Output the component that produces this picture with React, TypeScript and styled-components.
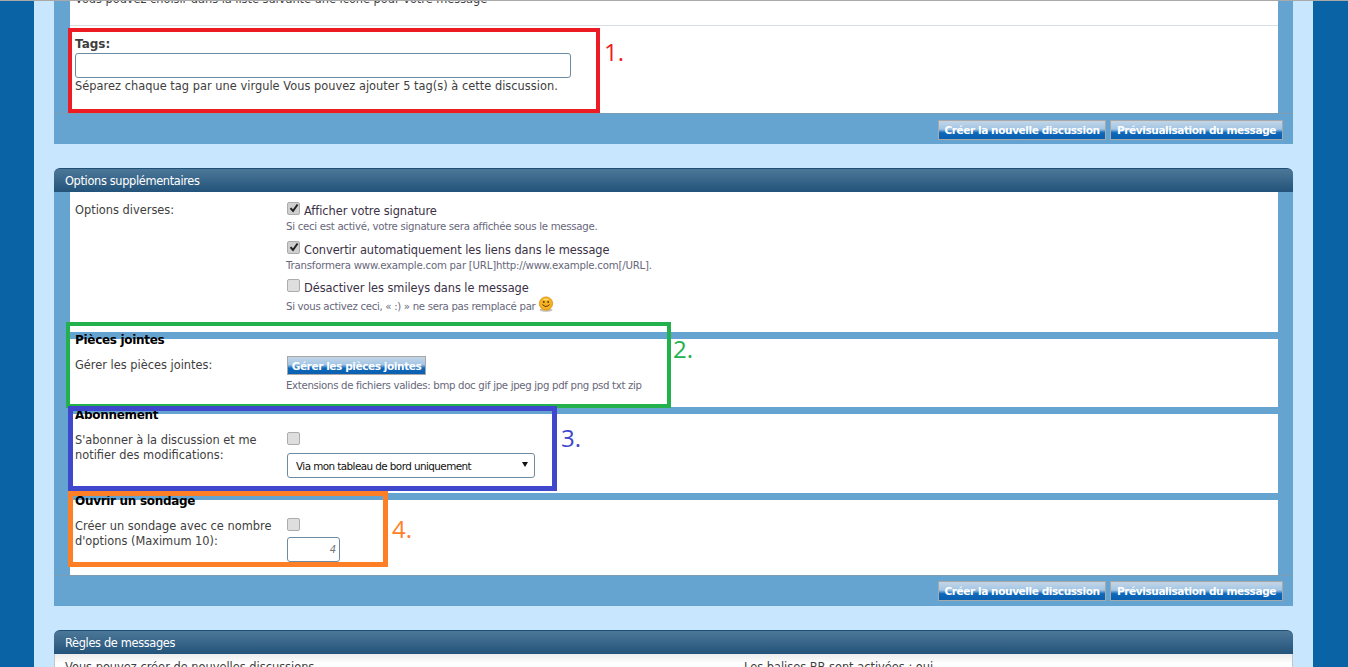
import React from "react";
import styled, { createGlobalStyle } from "styled-components";

const Global = createGlobalStyle`
  html, body { margin: 0; padding: 0; height: 667px; overflow: hidden; }
  body { font-family: "DejaVu Sans", Verdana, sans-serif; font-size: 12px; color: #3e3e3e; background: #0a63a5; }
  * { box-sizing: border-box; }
`;

const Page = styled.div`
  position: relative;
  height: 667px;
  overflow: hidden;
  background: #0a63a5;
  border-top: 1px solid #a9a9a9;
  padding: 0 35px 0 34px;
`;
const Column = styled.main`
  height: 666px;
  overflow: hidden;
  background: #c8e6fd;
  padding: 0 20px;
`;
const Panel = styled.section`
  margin-bottom: 24px;
`;
const PanelHead = styled.h2`
  margin: 0;
  height: 24px;
  padding: 0 11px;
  font-size: 11.4px;
  font-weight: 400;
  line-height: 25px;
  letter-spacing: -0.35px;
  color: #fff;
  background: linear-gradient(#4c7798, #23537a);
  border-top: 1px solid #1f4e75;
  border-radius: 6px 6px 0 0;
`;
const PanelBody = styled.div<{ $gap?: number }>`
  display: flex;
  flex-direction: column;
  gap: ${(p) => p.$gap ?? 7}px;
  background: #65a4d1;
  padding: 0 15px 0 16px;
  border-bottom: 1px solid #7d9db5;
`;
const Block = styled.div<{ $h: number }>`
  height: ${(p) => p.$h}px;
  background: #fff;
  padding: 0 0 0 5px;
  position: relative;
`;
const TopBlock = styled(Block)`
  overflow: hidden;
  border-bottom: 1px solid #d5dfe5;
`;
const Cut = styled.p`
  margin: -9px 0 0;
  font-size: 11.4px;
  letter-spacing: -0.03px;
  line-height: 14px;
`;
const TagLabel = styled.label`
  display: block;
  padding-top: 11px;
  font-size: 12px;
  font-weight: 700;
  line-height: 15px;
`;
const TagInput = styled.input`
  display: block;
  width: 496px;
  height: 25px;
  margin: 1px 0 1px;
  border: 1px solid #6c8ba3;
  border-radius: 3px;
  background: #fff;
`;
const Hint = styled.p`
  margin: 0;
  font-size: 11.4px;
  letter-spacing: 0.02px;
  line-height: 15px;
`;
const Foot = styled.div<{ $top: number }>`
  height: 30px;
  display: flex;
  justify-content: flex-end;
  align-items: flex-start;
  gap: 4px;
  background: #65a4d1;
  padding: ${(p) => p.$top}px 10px 0 0;
`;
const Btn = styled.button<{ $w: number }>`
  width: ${(p) => p.$w}px;
  height: 20px;
  padding: 0;
  font-family: "DejaVu Sans", Verdana, sans-serif;
  font-size: 10.6px;
  font-weight: 700;
  letter-spacing: -0.45px;
  color: #fff;
  border: 1px solid #a8a8a8;
  background: linear-gradient(#c3d5e5 0%, #a3c6e6 45%, #0f68ba 65%, #0a5fb0 100%);
  white-space: nowrap;
`;
const Row = styled.div<{ $top?: number }>`
  display: grid;
  grid-template-columns: 212px 1fr;
  padding-top: ${(p) => p.$top ?? 8}px;
`;
const RowLabel = styled.div`
  font-size: 11.4px;
  line-height: 15px;
`;
const Check = styled.span<{ $on?: boolean }>`
  display: flex;
  align-items: center;
  justify-content: center;
  width: 13px;
  height: 13px;
  background: ${(p) => (p.$on ? "#cfcfcf" : "#dedede")};
  border: 1px solid #acacac;
  border-radius: 2px;
  color: #222;
  flex: none;
`;
const OptionCheck = styled(Check)`
  margin-top: -5px;
`;
const OptionList = styled.div`
  margin-top: -1px;
`;
const Option = styled.div`
  display: flex;
  align-items: center;
  gap: 4px;
  height: 17px;
  font-size: 11.4px;
  letter-spacing: -0.06px;
  color: #3b3147;
`;
const Small = styled.p<{ $top?: number; $ls?: number }>`
  display: flex;
  align-items: flex-start;
  gap: 4px;
  margin: ${(p) => p.$top ?? 0}px 0 0 -1px;
  height: 15px;
  font-size: 10.2px;
  letter-spacing: ${(p) => p.$ls ?? -0.29}px;
  line-height: 15px;
  color: #67677a;
`;
const SmileyWrap = styled.span`
  display: block;
  margin: -3px 0 0 -1px;
  height: 16px;
`;
const OptionGroup = styled.div<{ $mb?: number }>`
  margin-bottom: ${(p) => p.$mb ?? 0}px;
`;
const SectionTitle = styled.h3`
  margin: -7px 0 0;
  height: 18px;
  font-size: 12px;
  font-weight: 700;
  letter-spacing: -0.3px;
  line-height: 16px;
  color: #000;
`;
const ManageBtn = styled.button`
  display: block;
  width: 139px;
  height: 19px;
  padding: 0;
  font-family: "DejaVu Sans", Verdana, sans-serif;
  font-size: 10.6px;
  font-weight: 700;
  letter-spacing: -0.45px;
  color: #fff;
  border: 1px solid #a8a8a8;
  background: linear-gradient(#c3d5e5 0%, #a3c6e6 45%, #0f68ba 65%, #0a5fb0 100%);
  margin: -2px 0 3px;
`;
const FormCheck = styled(Check)`
  margin-top: -1px;
`;
const SelectWrap = styled.div`
  position: relative;
  width: 248px;
  height: 25px;
  margin-top: 8px;
`;
const Select = styled.select`
  width: 100%;
  height: 100%;
  appearance: none;
  padding: 0 0 0 8px;
  font-family: "DejaVu Sans", Verdana, sans-serif;
  font-size: 10.4px;
  letter-spacing: -0.57px;
  color: #111;
  background: #fff;
  border: 1px solid #6c8ba3;
  border-radius: 3px;
`;
const Arrow = styled.svg`
  position: absolute;
  right: 7px;
  top: 9px;
  width: 6px;
  height: 5px;
`;
const NumInput = styled.input`
  display: block;
  width: 53px;
  height: 25px;
  margin-top: 6px;
  padding: 0 3px;
  text-align: right;
  font-family: "DejaVu Sans", Verdana, sans-serif;
  font-size: 10px;
  font-style: italic;
  color: #777;
  border: 1px solid #6c8ba3;
  border-radius: 3px;
  background: #fff;
`;
const RulesBody = styled.div`
  display: grid;
  grid-template-columns: 679px 1fr;
  height: 40px;
  padding: 6px 10px 0;
  background: linear-gradient(#ececec, #fff 10px);
  border: 1px solid #c4c4c4;
  border-top: 0;
  font-size: 11.4px;
  line-height: 15px;
`;
const Mark = styled.div<{ $c: string; $x: number; $y: number; $w: number; $h: number; $b: number }>`
  position: absolute;
  left: ${(p) => p.$x}px;
  top: ${(p) => p.$y}px;
  width: ${(p) => p.$w}px;
  height: ${(p) => p.$h}px;
  border: ${(p) => p.$b}px solid ${(p) => p.$c};
  pointer-events: none;
`;
const Num = styled.span<{ $c: string; $x: number; $y: number }>`
  position: absolute;
  left: ${(p) => p.$x}px;
  top: ${(p) => p.$y}px;
  font-family: "Open Sans", sans-serif;
  font-size: 24px;
  line-height: 28px;
  color: ${(p) => p.$c};
`;

const Tick = () => (
  <svg width="10" height="10" viewBox="0 0 10 10">
    <path d="M1.5 5.2 L4 8 L8.6 1.5" fill="none" stroke="currentColor" strokeWidth="2" />
  </svg>
);

const Smiley = () => (
  <svg width="16" height="16" viewBox="0 0 16 16">
    <ellipse cx="8" cy="14" rx="6.5" ry="1.8" fill="#c9c2b4" />
    <circle cx="8" cy="7.5" r="6.6" fill="#f6b21f" stroke="#d98c10" strokeWidth="0.8" />
    <path d="M4.8 3.6 Q8 1.8 11 3.6 Q8 4.8 4.8 3.6Z" fill="#fde58b" />
    <circle cx="5.8" cy="6" r="0.9" fill="#5c3a06" />
    <circle cx="10.2" cy="6" r="0.9" fill="#5c3a06" />
    <path d="M4.4 8.5 Q8 12.4 11.6 8.5" fill="none" stroke="#5c3a06" strokeWidth="1" />
  </svg>
);

const Buttons = ({ top }: { top: number }) => (
  <Foot $top={top}>
    <Btn $w={168}>Créer la nouvelle discussion</Btn>
    <Btn $w={173}>Prévisualisation du message</Btn>
  </Foot>
);

export default function App() {
  return (
    <Page>
      <Global />
      <Column>
        <Panel>
          <PanelBody $gap={0}>
            <TopBlock $h={25}>
              <Cut>Vous pouvez choisir dans la liste suivante une icône pour votre message</Cut>
            </TopBlock>
            <Block $h={87}>
              <TagLabel>Tags:</TagLabel>
              <TagInput />
              <Hint>Séparez chaque tag par une virgule Vous pouvez ajouter 5 tag(s) à cette discussion.</Hint>
            </Block>
          </PanelBody>
          <Buttons top={6} />
        </Panel>

        <Panel>
          <PanelHead>Options supplémentaires</PanelHead>
          <PanelBody>
            <Block $h={140}>
              <Row $top={11}>
                <RowLabel>Options diverses:</RowLabel>
                <OptionList>
                  <OptionGroup $mb={7}>
                    <Option><OptionCheck $on><Tick /></OptionCheck>Afficher votre signature</Option>
                    <Small>Si ceci est activé, votre signature sera affichée sous le message.</Small>
                  </OptionGroup>
                  <OptionGroup $mb={6}>
                    <Option><OptionCheck $on><Tick /></OptionCheck>Convertir automatiquement les liens dans le message</Option>
                    <Small $ls={-0.22}>Transformera www.example.com par [URL]http://www.example.com[/URL].</Small>
                  </OptionGroup>
                  <OptionGroup>
                    <Option><OptionCheck />Désactiver les smileys dans le message</Option>
                    <Small $top={3} $ls={-0.31}>Si vous activez ceci, « :) » ne sera pas remplacé par <SmileyWrap><Smiley /></SmileyWrap></Small>
                  </OptionGroup>
                </OptionList>
              </Row>
            </Block>
            <Block $h={68}>
              <SectionTitle>Pièces jointes</SectionTitle>
              <Row>
                <RowLabel>Gérer les pièces jointes:</RowLabel>
                <div>
                  <ManageBtn>Gérer les pièces jointes</ManageBtn>
                  <Small $ls={-0.32}>Extensions de fichiers valides: bmp doc gif jpe jpeg jpg pdf png psd txt zip</Small>
                </div>
              </Row>
            </Block>
            <Block $h={79}>
              <SectionTitle>Abonnement</SectionTitle>
              <Row>
                <RowLabel>S'abonner à la discussion et me<br />notifier des modifications:</RowLabel>
                <div>
                  <FormCheck />
                  <SelectWrap>
                    <Select defaultValue="a">
                      <option value="a">Via mon tableau de bord uniquement</option>
                    </Select>
                    <Arrow viewBox="0 0 6 5"><path d="M0 0H6L3 5Z" fill="#111" /></Arrow>
                  </SelectWrap>
                </div>
              </Row>
            </Block>
            <Block $h={75}>
              <SectionTitle>Ouvrir un sondage</SectionTitle>
              <Row>
                <RowLabel>Créer un sondage avec ce nombre<br />d'options (Maximum 10):</RowLabel>
                <div>
                  <FormCheck />
                  <NumInput readOnly value="4" />
                </div>
              </Row>
            </Block>
          </PanelBody>
          <Buttons top={5} />
        </Panel>

        <Panel>
          <PanelHead>Règles de messages</PanelHead>
          <RulesBody>
            <div>Vous pouvez créer de nouvelles discussions</div>
            <div>Les balises BB sont activées : oui</div>
          </RulesBody>
        </Panel>
      </Column>

      <Mark $c="#ed1c24" $x={68} $y={27} $w={532} $h={85} $b={4} />
      <Num $c="#ed1c24" $x={604} $y={37}>1.</Num>
      <Mark $c="#22b14c" $x={66} $y={321} $w={605} $h={86} $b={4} />
      <Num $c="#22b14c" $x={673} $y={334}>2.</Num>
      <Mark $c="#ff7f27" $x={68} $y={490} $w={320} $h={76} $b={5} />
      <Mark $c="#3f48cc" $x={68} $y={405} $w={489} $h={85} $b={5} />
      <Num $c="#3f48cc" $x={561} $y={423}>3.</Num>
      <Num $c="#ff7f27" $x={392} $y={514}>4.</Num>
    </Page>
  );
}
